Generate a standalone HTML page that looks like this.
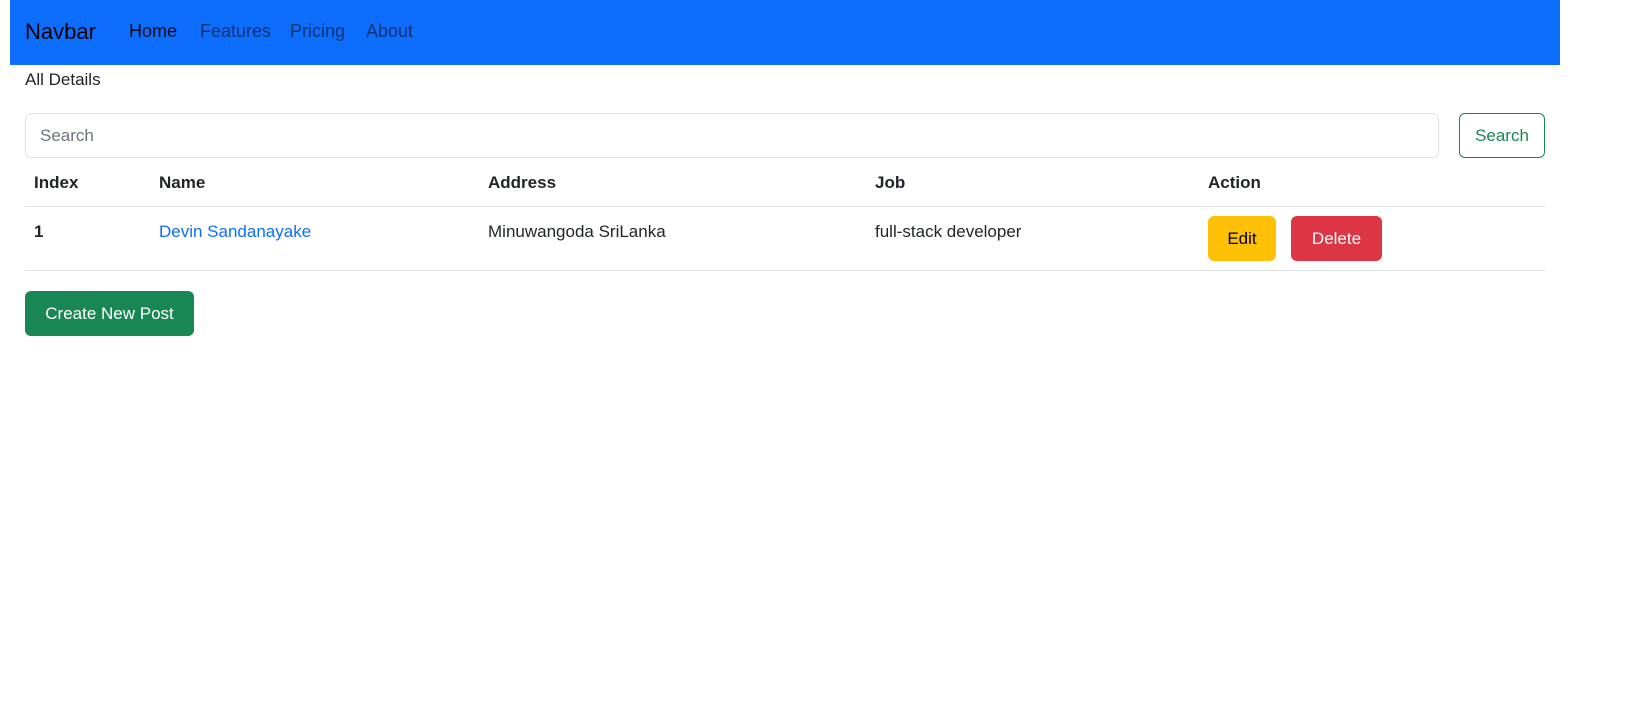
<!DOCTYPE html>
<html><head><style>
body{margin:0;width:1640px;height:710px;background:#fff;font-family:"Liberation Sans",sans-serif;color:#212529;position:relative;overflow:hidden}
.a{position:absolute;white-space:nowrap}
.nav{left:10px;top:0;width:1550px;height:65px;background:#0d6efd}
.lnk{font-size:18px;top:21px;color:rgba(0,0,0,.55)}
.btn{position:absolute;border-radius:6px;box-sizing:border-box;font-size:17px;display:flex;align-items:center;justify-content:center}
.th{font-weight:bold;font-size:17px;top:173px}
.td{font-size:17px;top:222px}
.line{position:absolute;left:25px;width:1520px;height:1px;background:#dee2e6}
</style></head><body>
<div class="a nav"></div>
<div class="a" style="left:25px;top:19px;font-size:22px;color:#000">Navbar</div>
<div class="a lnk" style="left:129px;color:rgba(0,0,0,.9)">Home</div>
<div class="a lnk" style="left:200px">Features</div>
<div class="a lnk" style="left:290px">Pricing</div>
<div class="a lnk" style="left:366px">About</div>
<div class="a" style="left:25px;top:70px;font-size:17px">All Details</div>
<div class="a" style="left:25px;top:113px;width:1414px;height:45px;border:1px solid #dee2e6;border-radius:6px;box-sizing:border-box"></div>
<div class="a" style="left:40px;top:126px;font-size:17px;color:#6c757d">Search</div>
<div class="btn" style="left:1459px;top:113px;width:86px;height:45px;border:1px solid #198754;color:#198754">Search</div>
<div class="a th" style="left:34px">Index</div>
<div class="a th" style="left:159px">Name</div>
<div class="a th" style="left:488px">Address</div>
<div class="a th" style="left:875px">Job</div>
<div class="a th" style="left:1208px">Action</div>
<div class="line" style="top:206px"></div>
<div class="a td" style="left:34px;font-weight:bold">1</div>
<div class="a td" style="left:159px;color:#0d6efd">Devin Sandanayake</div>
<div class="a td" style="left:488px">Minuwangoda SriLanka</div>
<div class="a td" style="left:875px">full-stack developer</div>
<div class="btn" style="left:1208px;top:216px;width:68px;height:45px;background:#ffc107;color:#000">Edit</div>
<div class="btn" style="left:1291px;top:216px;width:91px;height:45px;background:#dc3545;color:#fff">Delete</div>
<div class="line" style="top:270px"></div>
<div class="btn" style="left:25px;top:291px;width:169px;height:45px;background:#198754;color:#fff">Create New Post</div>
</body></html>
